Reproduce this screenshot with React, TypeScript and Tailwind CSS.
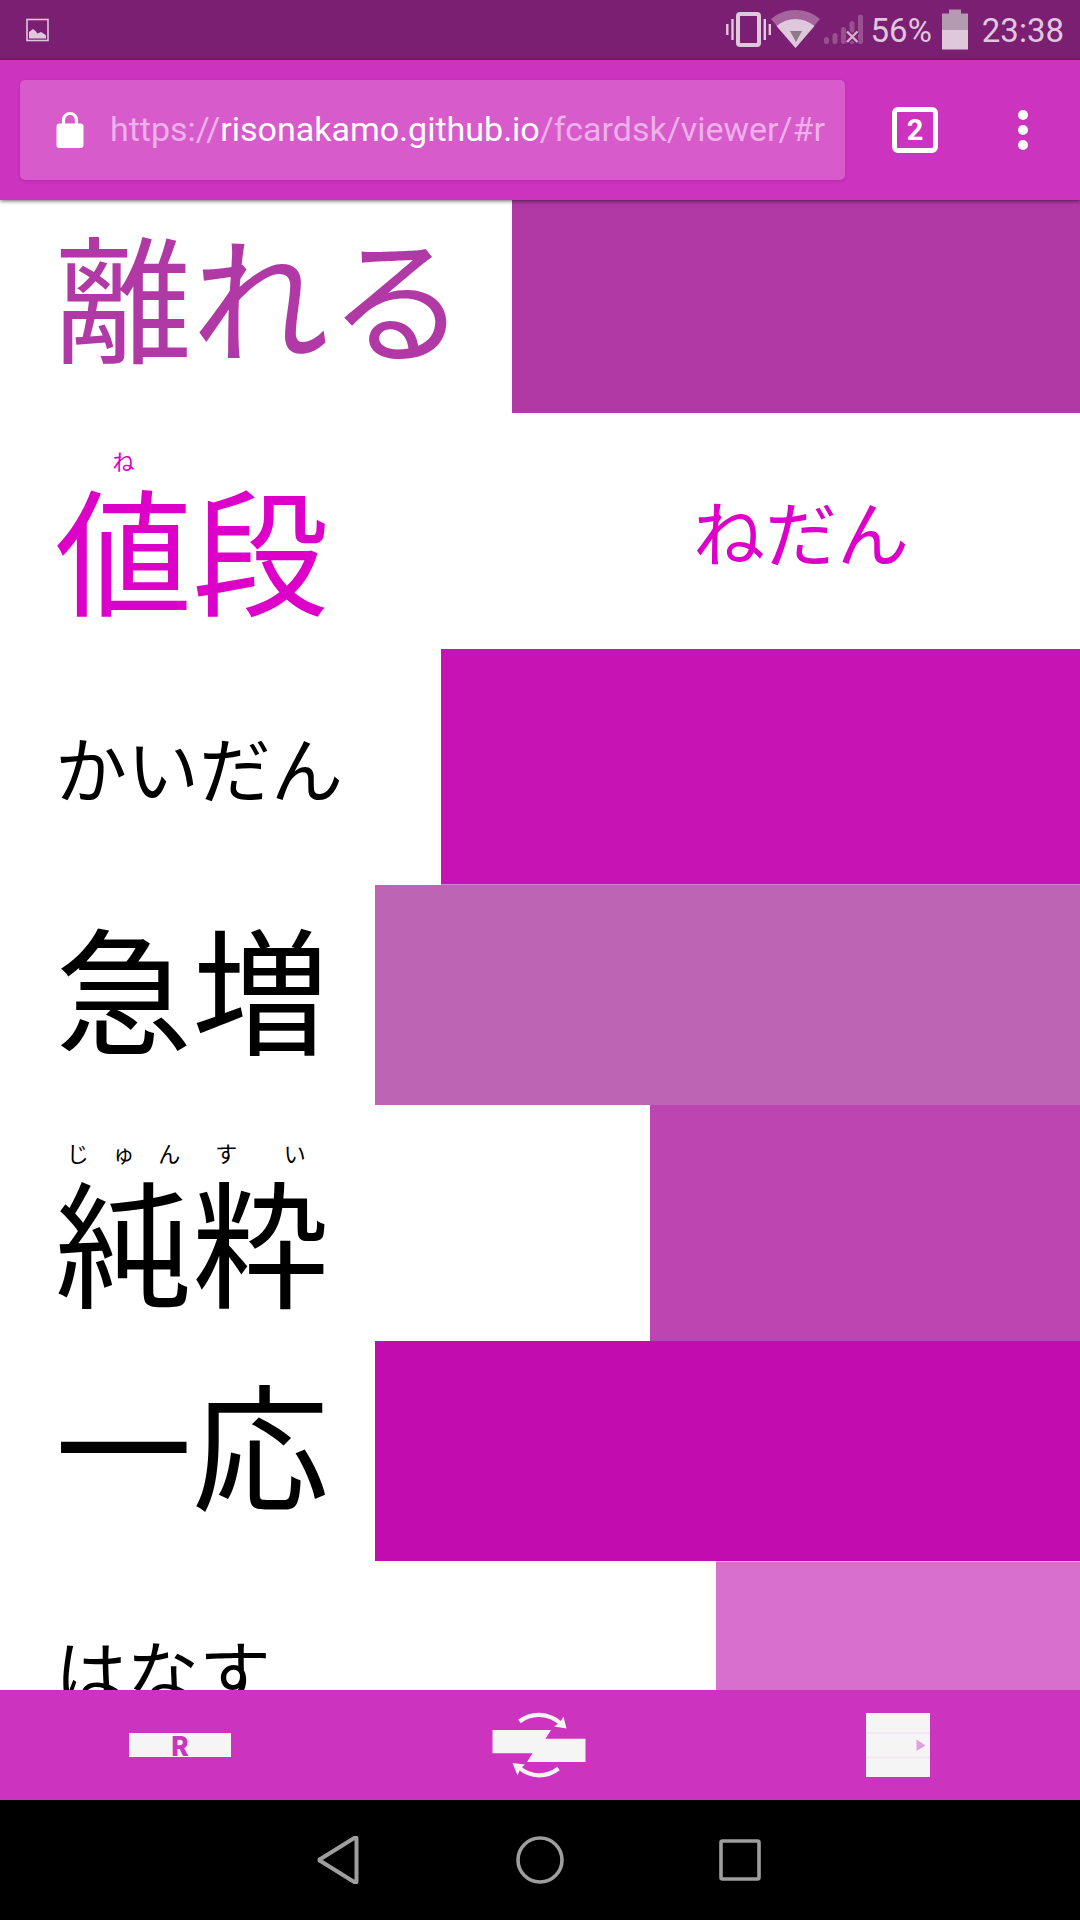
import React from "react";

type Segment = { base: string; reading?: string[] };

type Card = {
  kind: "kanji" | "ruby" | "kana";
  segments: Segment[];
  tone: string;
  height: string;
  frontWidth: string;
  cover: string;
  answer?: string;
};

const cards: Card[] = [
  {
    kind: "kanji",
    segments: [{ base: "離れる" }],
    tone: "text-[#b139a5]",
    height: "min-h-[220px]",
    frontWidth: "w-[512px]",
    cover: "bg-[#b139a5]",
  },
  {
    kind: "ruby",
    segments: [{ base: "値", reading: ["ね"] }, { base: "段" }],
    tone: "text-[#dc00c8]",
    height: "min-h-[236px]",
    frontWidth: "w-[522px]",
    cover: "bg-white",
    answer: "ねだん",
  },
  {
    kind: "kana",
    segments: [{ base: "かいだん" }],
    tone: "text-black",
    height: "min-h-[236px]",
    frontWidth: "w-[441px]",
    cover: "bg-[#c712b4] border-b border-[#dc7fd3]",
  },
  {
    kind: "kanji",
    segments: [{ base: "急増" }],
    tone: "text-black",
    height: "min-h-[220px]",
    frontWidth: "w-[375px]",
    cover: "bg-[#bd65b4]",
  },
  {
    kind: "ruby",
    segments: [
      { base: "純", reading: ["じ", "ゅ", "ん"] },
      { base: "粋", reading: ["す", "い"] },
    ],
    tone: "text-black",
    height: "min-h-[236px]",
    frontWidth: "w-[650px]",
    cover: "bg-[#bd45b2]",
  },
  {
    kind: "kanji",
    segments: [{ base: "一応" }],
    tone: "text-black",
    height: "min-h-[220px]",
    frontWidth: "w-[375px]",
    cover: "bg-[#c20caf]",
  },
  {
    kind: "kana",
    segments: [{ base: "はなす" }],
    tone: "text-black",
    height: "min-h-[220px]",
    frontWidth: "w-[716px]",
    cover: "bg-[#d86ece] border-t border-[#eab0e4]",
  },
];

function Front({ card }: { card: Card }) {
  if (card.kind === "kana") {
    return (
      <div className="flex h-full items-center pb-0.5 text-[72px]">
        {card.segments[0].base}
      </div>
    );
  }
  if (card.kind === "kanji") {
    return (
      <div className="flex h-full items-center pb-5 text-[137px] leading-none">
        {card.segments[0].base}
      </div>
    );
  }
  return (
    <div className="flex h-full items-end pb-[34px]">
      {card.segments.map((s) => (
        <ruby key={s.base} className="flex flex-col-reverse text-[137px] leading-none">
          {s.base}
          {s.reading && (
            <rt className="flex justify-around text-[22px] leading-9">
              {s.reading.map((r) => (
                <span key={r}>{r}</span>
              ))}
            </rt>
          )}
        </ruby>
      ))}
    </div>
  );
}

function StatusBar() {
  return (
    <div className="flex h-[60px] shrink-0 items-center justify-between bg-[#7b1f72] pr-4 pl-[26px] text-[#dfc7dc]">
      <svg width="23" height="24" viewBox="0 0 23 24" aria-label="Screenshot saved">
        <rect x="1" y="1.5" width="21" height="21" fill="none" stroke="currentColor" strokeWidth="1.6" />
        <path d="M3 20.5V14l4-3 2 1.500 2.500 3 3.500-1.500 4 2.500 1 1v3z" fill="currentColor" />
      </svg>
      <div className="flex items-center font-[Roboto] text-[33px] leading-none">
        <svg width="46" height="60" viewBox="725 0 46 60" aria-label="Vibrate">
          <rect x="738" y="14" width="21" height="31" rx="2" fill="none" stroke="currentColor" strokeWidth="4" />
          <path d="M727.300 24v11M732.500 19v21M764.800 19v21M769.800 24v11" stroke="currentColor" strokeWidth="2.400" />
        </svg>
        <svg width="50" height="60" viewBox="771 0 50 60" aria-label="Wi-Fi">
          <path d="M771 19C785 7 806 7 820 19L795.500 48z" fill="#a3659c" />
          <path d="M776.500 26C788 16.500 803 16.500 814.500 26L795.500 48z" fill="currentColor" />
          <path d="M790 31h12l-6 11z" fill="#8b7b89" />
        </svg>
        <svg width="44" height="60" viewBox="821 0 44 60" aria-label="No signal">
          <g stroke="#985090" strokeWidth="5" strokeLinecap="round">
            <path d="M826.500 39.500v2M835 35.500v6M843.500 29.500v12M852 23.500v18M860.500 17v24.500" />
          </g>
          <path d="M847 31.500l10.500 10.500M857.500 31.500L847 42" stroke="#7b1f72" strokeWidth="5" />
          <path d="M847 31.500l10.500 10.500M857.500 31.500L847 42" stroke="#d3b3d0" strokeWidth="2.400" />
        </svg>
        <span className="ml-1.5">56%</span>
        <svg className="ml-2.5" width="26" height="60" viewBox="943 0 26 60" aria-label="Battery">
          <path d="M943 13.500h7V9.500h12v4h7V30h-26z" fill="#b49bb2" />
          <path d="M943 30h26v19.500h-26z" fill="currentColor" />
        </svg>
        <span className="ml-3.5">23:38</span>
      </div>
    </div>
  );
}

function AddressBar() {
  return (
    <header className="relative z-10 flex h-[140px] shrink-0 items-center bg-[#cc33be] pl-5 font-[Roboto] shadow-[0_1px_4px_rgba(0,0,0,0.6)]">
      <div className="flex h-[100px] min-w-0 flex-1 items-center rounded-[5px] bg-[#d75bcb] pr-5 pl-9 shadow-[0_1px_3px_rgba(150,20,140,0.35)]">
        <svg className="shrink-0" width="28" height="38" viewBox="0 0 28 38" aria-label="Secure">
          <path d="M7.500 15V9a6.500 6.500 0 0 1 13 0v6" fill="none" stroke="#fff" strokeWidth="3.200" />
          <rect x="0.500" y="12.500" width="27" height="24.500" rx="3" fill="#fff" />
        </svg>
        <div
          role="textbox"
          aria-label="Address"
          tabIndex={0}
          className="ml-[26px] min-w-0 flex-1 overflow-hidden pb-0.5 text-[34px] leading-[44px] whitespace-nowrap text-[#eeb0e8]"
        >
          https://<span className="text-white">risonakamo.github.io</span>/fcardsk/viewer/#r
        </div>
      </div>
      <button aria-label="Tabs" className="ml-[47px] flex size-[46px] items-center justify-center rounded-md border-[5px] border-white text-[29px] leading-none font-bold text-white">
        2
      </button>
      <button aria-label="Menu" className="mr-[37px] ml-[65px] flex w-10 flex-col items-center gap-[5px]">
        <span className="size-2.5 rounded-full bg-white" />
        <span className="size-2.5 rounded-full bg-white" />
        <span className="size-2.5 rounded-full bg-white" />
      </button>
    </header>
  );
}

function ActionBar() {
  return (
    <nav aria-label="Deck actions" className="grid h-[110px] shrink-0 grid-cols-3 bg-[#cc33be] pr-0.5">
      <button className="flex items-center justify-center">
        <span className="flex h-6 w-[102px] items-center justify-center bg-[#f5f5f5] font-['Noto_Sans_CJK_JP'] text-[26px] leading-6 font-black text-[#cc33be]">
          R
        </span>
      </button>
      <button aria-label="Swap sides" className="flex items-center justify-center">
        <svg width="94" height="66" viewBox="0 0 94 66" fill="#f5f5f5">
          <path d="M0.500 18H59l-5.500 8.700H93.500V50H35l5.500-8.700H0.500z" />
          <g fill="none" stroke="#f5f5f5" strokeWidth="4.200">
            <path d="M27.500 9.500C39 0.500 56 0 69.500 12" />
            <path d="M66.500 56.500C55 65.500 39 66 27 55.500" />
          </g>
          <path d="M74.500 16.500L62 14.500l6-4 3.500-6z" />
          <path d="M20.500 51L33 52.500l-4.500 4-3 7z" />
        </svg>
      </button>
      <button aria-label="Open list" className="flex items-center justify-center">
        <svg width="64" height="64" viewBox="0 0 64 64">
          <path d="M0 0h64v64H0z" fill="#f5f5f5" />
          <path d="M0 20h64M0 44.500h64" stroke="#f3e8f2" strokeWidth="2" />
          <path d="M50.500 26.500v11.500l9-5.500z" fill="#e3a0dc" />
        </svg>
      </button>
    </nav>
  );
}

function SystemNav() {
  return (
    <nav aria-label="System" className="flex h-[120px] shrink-0 items-center justify-center gap-[152px] bg-black">
      <button aria-label="Back">
        <svg width="48" height="48" viewBox="0 0 48 48" fill="none" stroke="#9e9e9e" strokeWidth="4" strokeLinejoin="round">
          <path d="M40.500 2.500v43a1 1 0 0 1-1.500 1L4.500 25a1 1 0 0 1 0-2L39 1.500a1 1 0 0 1 1.500 1z" />
        </svg>
      </button>
      <button aria-label="Home">
        <svg width="48" height="48" viewBox="0 0 48 48" fill="none" stroke="#9e9e9e" strokeWidth="3.600">
          <circle cx="24" cy="24" r="22" />
        </svg>
      </button>
      <button aria-label="Recent apps">
        <svg width="48" height="48" viewBox="0 0 48 48" fill="none" stroke="#9e9e9e" strokeWidth="3.600">
          <rect x="5" y="5" width="38" height="38" rx="1.500" />
        </svg>
      </button>
    </nav>
  );
}

export default function App() {
  return (
    <div className="flex h-screen flex-col overflow-hidden bg-white">
      <StatusBar />
      <AddressBar />
      <main
        lang="ja"
        className="min-h-0 flex-1 overflow-hidden font-['Noto_Sans_CJK_JP',sans-serif]"
      >
        <div className="-mt-[7px] flex flex-col">
          {cards.map((card) => (
            <div key={card.segments[0].base} className={`flex ${card.height} ${card.tone}`}>
              <div className={`${card.frontWidth} shrink-0 pl-[55px] whitespace-nowrap`}>
                <Front card={card} />
              </div>
              <div className={`flex flex-1 items-center justify-center pb-0.5 text-[72px] ${card.cover}`}>
                {card.answer}
              </div>
            </div>
          ))}
        </div>
      </main>
      <ActionBar />
      <SystemNav />
    </div>
  );
}
